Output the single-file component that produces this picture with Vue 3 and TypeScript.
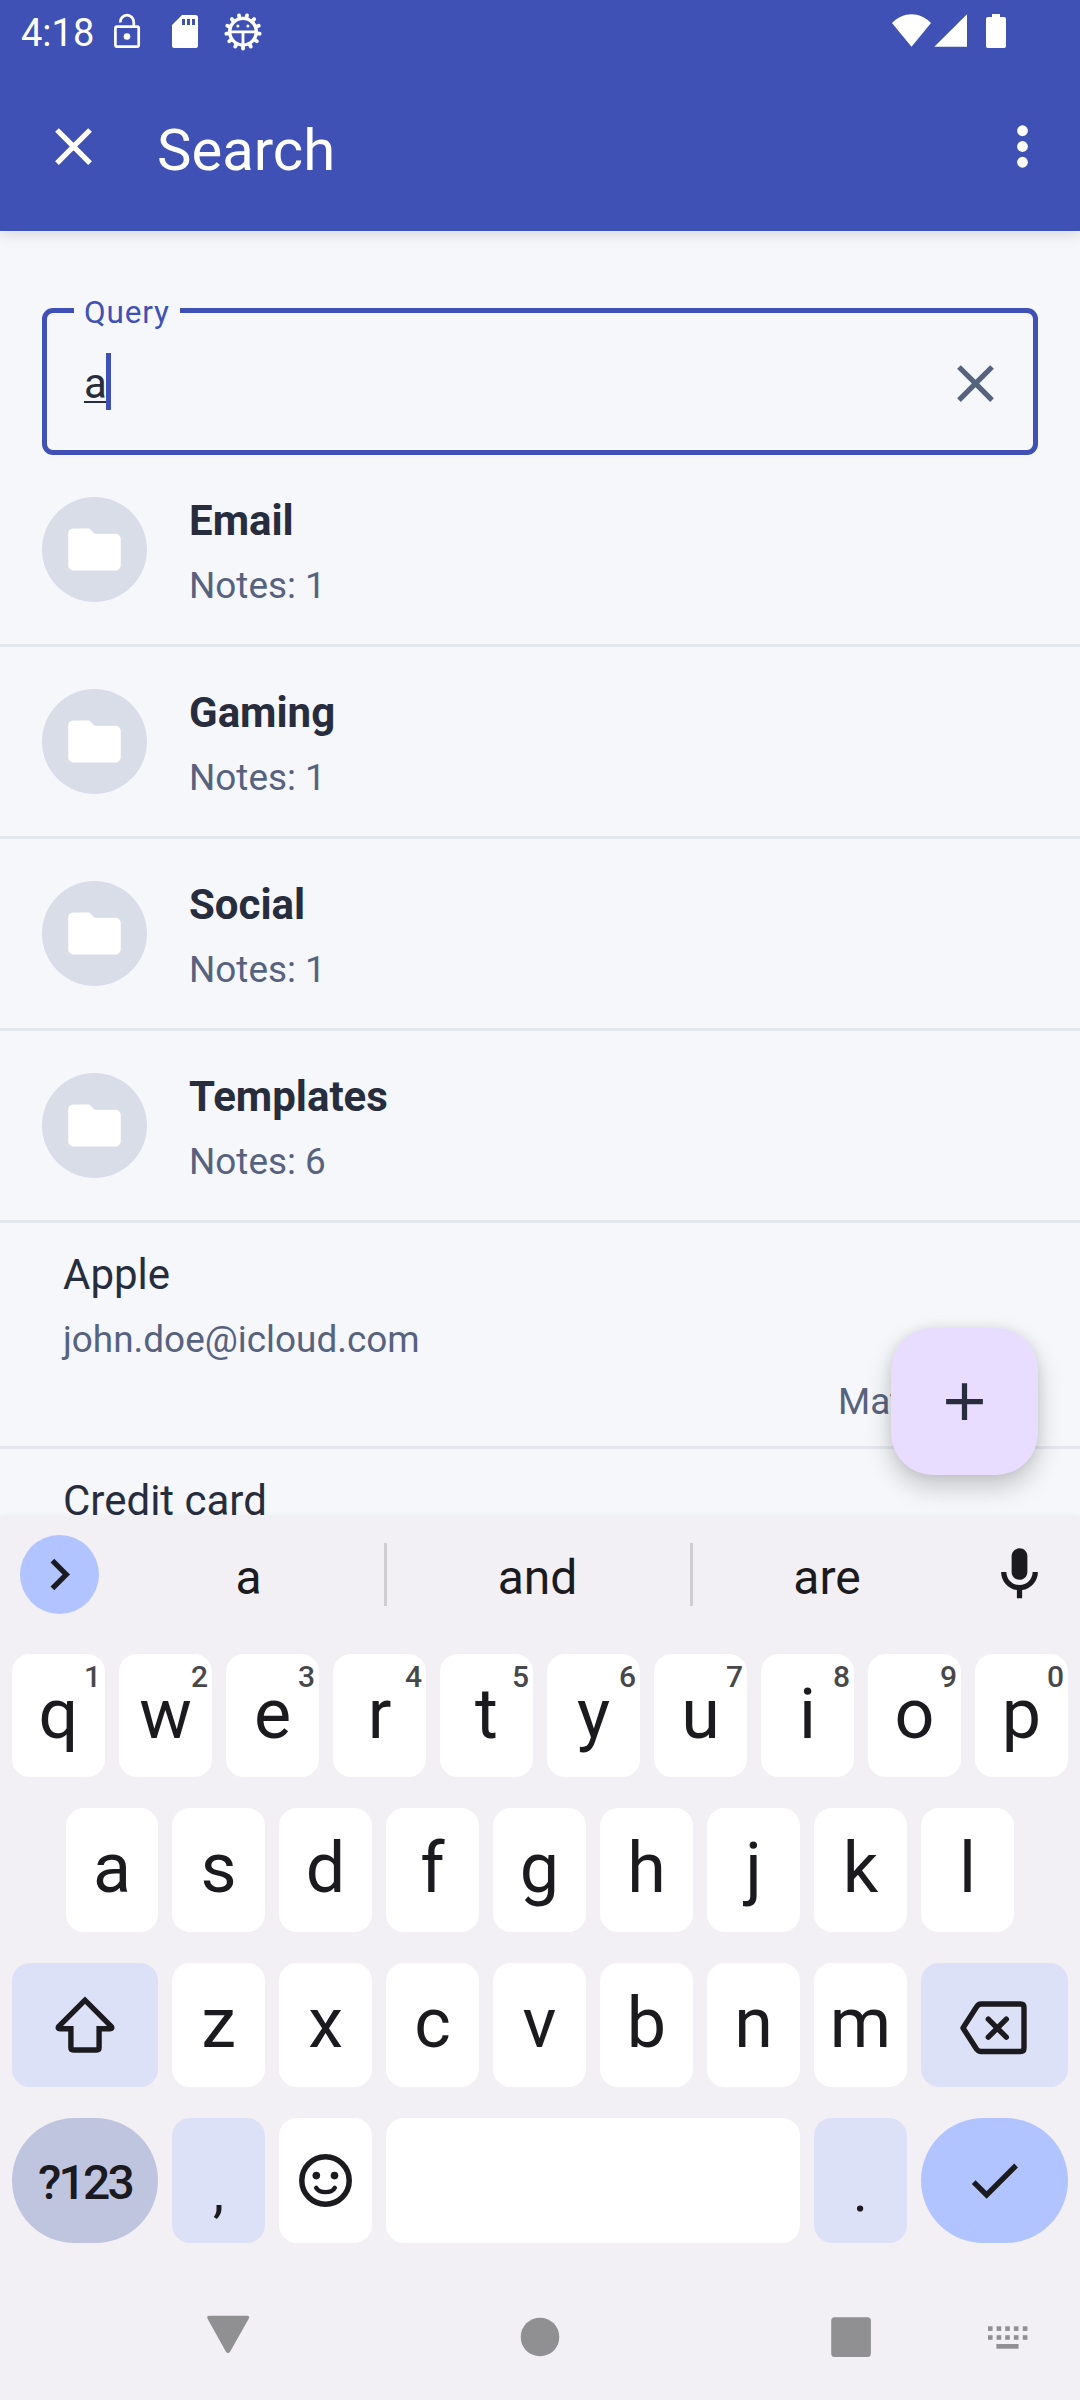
<script setup lang="ts">
interface Folder {
  name: string
  count: number
}

interface Key {
  char: string
  hint?: string
}

const folders: Folder[] = [
  { name: 'Email', count: 1 },
  { name: 'Gaming', count: 1 },
  { name: 'Social', count: 1 },
  { name: 'Templates', count: 6 },
]

const topRow: Key[] = 'qwertyuiop'.split('').map((char, i) => ({ char, hint: String((i + 1) % 10) }))
const homeRow: string[] = 'asdfghjkl'.split('')
const bottomRow: string[] = 'zxcvbnm'.split('')

const gearTeeth: number[] = Array.from({ length: 13 }, (_, i) => (i * 360) / 13)
const dotColumns: number[] = [988, 996.6, 1005.2, 1013.9, 1022.8]
</script>

<template>
  <div class="screen">
    <header class="top">
      <div class="status">
        <span class="time">4:18</span>
        <svg class="lock" width="40" height="66" viewBox="107 0 40 66" fill="none" stroke="#fff" stroke-width="2.7">
          <rect x="115.4" y="26.6" width="23.3" height="20" rx="1.6" />
          <path d="M120.2 22.6c0-4.3 3-7.4 6.8-7.4s6.8 3.1 6.8 7.4v4" />
          <circle cx="127" cy="36.5" r="3.3" fill="#fff" stroke="none" />
        </svg>
        <svg class="sd" width="40" height="66" viewBox="165 0 40 66">
          <path fill="#fff" fill-rule="evenodd" d="M182 15h13.5a2.5 2.5 0 0 1 2.5 2.5v28a2.5 2.5 0 0 1-2.5 2.5h-21a2.5 2.5 0 0 1-2.5-2.5V25zM182 19v6h3v-6zM187 19v6h3v-6zM192 19v6h3v-6z" />
        </svg>
        <svg class="gear" width="40" height="66" viewBox="223 0 40 66" fill="none" stroke="#fff">
          <circle cx="243" cy="31.7" r="13.3" stroke-width="3.4" />
          <path
            v-for="angle in gearTeeth"
            :key="angle"
            d="M243 45.5v3"
            stroke-width="3.8"
            stroke-linecap="round"
            :transform="`rotate(${angle} 243 31.7)`"
          />
          <path d="M230 31.8h26M243 32v13" stroke-width="2.8" />
          <g fill="#fff" stroke="none">
            <circle cx="237.9" cy="26" r="1.5" />
            <circle cx="247.9" cy="26" r="1.5" />
          </g>
        </svg>
        <svg class="signals" width="120" height="66" viewBox="890 0 120 66" fill="#fff">
          <path d="M892 23C903 11.200 920 11.200 931 23L911.500 46.700z" />
          <path d="M967 14.300V46.800H934.300z" />
          <path d="M992 14h8v3h4a2 2 0 0 1 2 2v27a2 2 0 0 1-2 2h-16a2 2 0 0 1-2-2V19a2 2 0 0 1 2-2h4z" />
        </svg>
      </div>
      <div class="appbar">
        <svg class="close" width="63" height="63" viewBox="0 0 24 24" fill="#fff">
          <path d="M19 6.410L17.590 5 12 10.590 6.410 5 5 6.410 10.590 12 5 17.590 6.410 19 12 13.410 17.590 19 19 17.590 13.410 12z" />
        </svg>
        <h1 class="title">Search</h1>
        <svg class="more" width="63" height="63" viewBox="0 0 24 24" fill="#fff">
          <circle cx="12" cy="6" r="2.050" />
          <circle cx="12" cy="12" r="2.050" />
          <circle cx="12" cy="18" r="2.050" />
        </svg>
      </div>
    </header>

    <main class="content">
      <div class="field">
        <span class="label">Query</span>
        <span class="value">a</span>
        <span class="caret"></span>
        <svg class="clear" width="63" height="63" viewBox="0 0 24 24" fill="#57627f">
          <path d="M19 6.410L17.590 5 12 10.590 6.410 5 5 6.410 10.590 12 5 17.590 6.410 19 12 13.410 17.590 19 19 17.590 13.410 12z" />
        </svg>
      </div>

      <div v-for="folder in folders" :key="folder.name" class="folder">
        <div class="avatar">
          <svg width="63" height="63" viewBox="0 0 24 24" fill="#fff">
            <path d="M10 4H4c-1.100 0-2 .900-2 2v12c0 1.100.900 2 2 2h16c1.100 0 2-.900 2-2V8c0-1.100-.900-2-2-2h-8z" />
          </svg>
        </div>
        <div class="texts">
          <div class="name">{{ folder.name }}</div>
          <div class="sub">Notes: {{ folder.count }}</div>
        </div>
      </div>

      <div class="note">
        <div class="note-title">Apple</div>
        <div class="sub">john.doe@icloud.com</div>
        <div class="sub match">Matches</div>
      </div>
      <div class="note">
        <div class="note-title">Credit card</div>
      </div>
    </main>

    <button class="fab" aria-label="Add">
      <svg width="63" height="63" viewBox="0 0 24 24" fill="#272d3d">
        <path d="M19 13h-6v6h-2v-6H5v-2h6V5h2v6h6z" />
      </svg>
    </button>

    <section class="keyboard">
      <div class="strip">
        <div class="expand">
          <svg width="63" height="63" viewBox="0 0 24 24" fill="#1b1b1f">
            <path d="M10 6L8.590 7.410 13.170 12l-4.580 4.590L10 18l6-6z" />
          </svg>
        </div>
        <div class="word w1">a</div>
        <i class="bar"></i>
        <div class="word w2">and</div>
        <i class="bar"></i>
        <div class="word w3">are</div>
        <svg class="mic" width="63" height="63" viewBox="0 0 24 24" fill="#1b1b1f">
          <path d="M12 14c1.660 0 3-1.340 3-3V5c0-1.660-1.340-3-3-3S9 3.340 9 5v6c0 1.660 1.340 3 3 3z" />
          <path d="M17 11c0 2.760-2.240 5-5 5s-5-2.240-5-5H5c0 3.530 2.610 6.430 6 6.920V21h2v-3.080c3.390-.490 6-3.390 6-6.920z" />
        </svg>
      </div>

      <div class="row first">
        <div v-for="key in topRow" :key="key.char" class="key">
          {{ key.char }}<span class="hint">{{ key.hint }}</span>
        </div>
      </div>
      <div class="row home">
        <div v-for="char in homeRow" :key="char" class="key">{{ char }}</div>
      </div>
      <div class="row third">
        <div class="key wide-left tint">
          <svg width="146" height="124" viewBox="0 0 146 124" fill="none" stroke="#1b1b1f" stroke-width="5.4" stroke-miterlimit="10">
            <path d="M73 37.200L46.600 63.600Q45.400 65.700 48 65.700H58.900V84.500Q58.900 87 61.300 87H84.700Q87.100 87 87.100 84.500V65.700H98Q100.600 65.700 99.400 63.600Z" />
          </svg>
        </div>
        <div v-for="char in bottomRow" :key="char" class="key">{{ char }}</div>
        <div class="key wide-right tint">
          <svg width="147" height="124" viewBox="0 0 147 124" fill="none" stroke="#1b1b1f" stroke-width="5.4" stroke-linejoin="round">
            <path d="M42 65L55.500 44Q57.300 41 60 41H99.500Q103 41 103 44.500V85Q103 88.500 99.500 88.500H60Q57.300 88.500 55.500 86Z" />
            <path d="M67.300 56.200L85.300 74.200M85.300 56.200L67.300 74.200" stroke-linecap="round" />
          </svg>
        </div>
      </div>
      <div class="row fourth">
        <div class="key wide-left symbols">?123</div>
        <div class="key tint punct">,</div>
        <div class="key">
          <svg width="93" height="125" viewBox="0 0 93 125" fill="none" stroke="#1b1b1f">
            <circle cx="46.500" cy="62.500" r="23.700" stroke-width="5.500" />
            <path d="M37.200 69.800C40.500 75.600 52.500 75.600 55.800 69.800" stroke-width="4.400" stroke-linecap="round" />
            <g fill="#1b1b1f" stroke="none">
              <circle cx="37.300" cy="57.600" r="3.800" />
              <circle cx="55.500" cy="57.600" r="3.800" />
            </g>
          </svg>
        </div>
        <div class="key space"></div>
        <div class="key tint punct">.</div>
        <div class="key wide-right enter">
          <svg width="147" height="125" viewBox="0 0 147 125" fill="none" stroke="#1b1b1f" stroke-width="5.300">
            <path d="M52.700 64.200L65.600 76.900L95.100 47.500" />
          </svg>
        </div>
      </div>

      <svg class="nav" width="1080" height="157" viewBox="0 2243 1080 157" fill="#909092">
        <path d="M209.500 2315.700h37.500q3.300 0 1.600 3.300L230.200 2351.500q-2.200 3-4.400 0L207.700 2319q-1.700-3.300 1.800-3.300z" />
        <circle cx="540" cy="2337" r="19.300" />
        <rect x="831.200" y="2317.200" width="39.700" height="39.700" rx="3.500" />
        <g v-for="x in dotColumns" :key="x">
          <rect :x="x" y="2326.300" width="4.600" height="4.600" />
          <rect :x="x" y="2335.200" width="4.600" height="4.600" />
        </g>
        <rect x="996.400" y="2344" width="22.200" height="4.700" />
      </svg>
    </section>
  </div>
</template>

<style>
body {
  margin: 0;
}
</style>

<style scoped>
.screen {
  position: relative;
  width: 1080px;
  height: 2400px;
  overflow: hidden;
  display: flex;
  flex-direction: column;
  background: #f5f7fb;
  color: #272d3d;
  font-family: Roboto, sans-serif;
}
svg {
  display: block;
  flex: none;
}
.top {
  position: relative;
  z-index: 1;
  flex: none;
  height: 231px;
  background: #3f51b5;
  color: #fff;
  box-shadow: 0 3px 14px rgba(0, 0, 0, 0.14);
}
.status {
  display: flex;
  height: 66px;
}
.time {
  width: 86px;
  padding-left: 21px;
  font-size: 38px;
  line-height: 67px;
}
.sd,
.gear {
  margin-left: 18px;
}
.signals {
  margin-left: auto;
  margin-right: 70px;
}
.appbar {
  display: flex;
  align-items: center;
  height: 161px;
  padding: 0 26px 0 42px;
}
.title {
  flex: 1;
  margin: 7px 0 0 52px;
  font-size: 58px;
  font-weight: 400;
  line-height: 80px;
}
.content {
  flex: none;
  height: 1286px;
  overflow: hidden;
}
.field {
  position: relative;
  display: flex;
  align-items: center;
  box-sizing: border-box;
  height: 147px;
  margin: 77px 42px 0;
  padding: 0 26px 0 37px;
  border: 5px solid #3f51b5;
  border-radius: 11px;
}
.label {
  position: absolute;
  left: 27px;
  top: -20px;
  box-sizing: border-box;
  width: 106px;
  padding-left: 10px;
  background: #f5f7fb;
  color: #3f51b5;
  font-size: 31.5px;
  line-height: 40px;
  letter-spacing: 0.8px;
}
.value {
  padding-top: 4px;
  font-size: 42px;
  line-height: 52px;
  text-decoration: underline;
  text-decoration-thickness: 2px;
  text-underline-offset: 3px;
}
.caret {
  width: 5px;
  height: 57px;
  margin-left: -1px;
  background: #3f51b5;
}
.clear {
  margin: 4px 0 0 auto;
}
.folder {
  display: flex;
  box-sizing: border-box;
  height: 192px;
  padding-left: 42px;
  border-bottom: 3px solid #e5e7ef;
}
.avatar {
  display: flex;
  align-items: center;
  justify-content: center;
  width: 105px;
  height: 105px;
  margin-top: 42px;
  border-radius: 50%;
  background: #d9dde8;
}
.texts {
  margin-left: 42px;
  padding-top: 41px;
}
.name,
.note-title {
  font-size: 42px;
  line-height: 50px;
}
.name {
  font-weight: 700;
}
.sub {
  margin-top: 17px;
  color: #57627f;
  font-size: 36.9px;
  line-height: 45px;
}
.note {
  box-sizing: border-box;
  height: 226px;
  padding: 27px 42px 0 63px;
  border-bottom: 3px solid #e5e7ef;
}
.match {
  padding-left: 775px;
  white-space: nowrap;
}
.fab {
  position: absolute;
  left: 891px;
  top: 1328px;
  display: flex;
  align-items: center;
  justify-content: center;
  width: 147px;
  height: 147px;
  padding: 0;
  border: 0;
  border-radius: 42px;
  background: #e9ddff;
  box-shadow: 0 12px 26px rgba(0, 0, 0, 0.2), 0 0 12px rgba(0, 0, 0, 0.08);
}
.keyboard {
  position: relative;
  flex: none;
  height: 883px;
  background: #f2f0f5;
  color: #1b1b1f;
  box-shadow: 0 -1px 5px rgba(0, 0, 0, 0.05);
}
.strip {
  display: flex;
  align-items: center;
  box-sizing: border-box;
  height: 137px;
  padding: 0 29px 22px 20px;
}
.expand {
  display: flex;
  align-items: center;
  justify-content: center;
  width: 79px;
  height: 79px;
  border-radius: 50%;
  background: #b1c4ff;
}
.word {
  padding-top: 7px;
  font-size: 48px;
  line-height: 60px;
  text-align: center;
}
.w1 {
  width: 271px;
  margin-left: 14px;
}
.w2 {
  width: 303px;
  text-indent: -2px;
}
.w3 {
  width: 268px;
}
.bar {
  width: 3px;
  height: 63px;
  background: #cfcdd2;
}
.mic {
  margin-left: auto;
}
.row {
  display: flex;
  gap: 14px;
  height: 124px;
  margin-bottom: 31px;
  padding: 0 12px;
}
.row.first {
  height: 123px;
}
.row.home {
  padding: 0 66px;
}
.row.fourth {
  height: 125px;
  margin-bottom: 0;
}
.key {
  position: relative;
  flex: 93 1 0;
  min-width: 0;
  border-radius: 18px;
  background: #fff;
  font-size: 70px;
  line-height: 121px;
  text-align: center;
}
.home .key:first-child {
  flex-grow: 92;
}
.hint {
  position: absolute;
  right: 4px;
  top: 5px;
  color: #48484b;
  font-size: 30px;
  font-weight: 500;
  line-height: 36px;
}
.wide-left {
  flex-grow: 146;
}
.wide-right {
  flex-grow: 147;
}
.space {
  flex-grow: 414;
}
.tint {
  background: #dde1f8;
}
.symbols {
  border-radius: 63px;
  background: #c0c5df;
  font-size: 48px;
  font-weight: 500;
  line-height: 130px;
  letter-spacing: -2.8px;
}
.punct {
  font-size: 56px;
  line-height: 148px;
}
.enter {
  border-radius: 63px;
  background: #b1c4ff;
}
</style>
